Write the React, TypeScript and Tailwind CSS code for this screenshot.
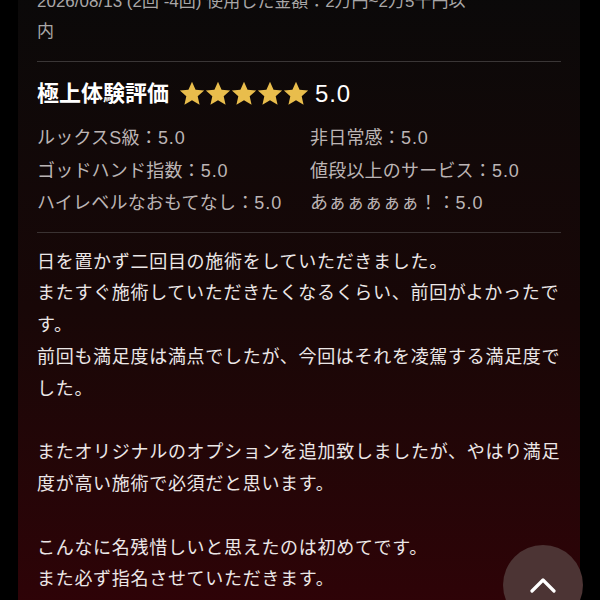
import React from "react";

const Star = () => (
  <svg width="26" height="26" viewBox="0 0 24 24" className="shrink-0">
    <path
      d="M12 0.8l3.3 7.2 7.9.8-5.95 5.3 1.75 7.8L12 17.85l-7 4.05 1.75-7.8L0.8 8.8l7.9-.8z"
      fill="#e9bd4c"
    />
  </svg>
);

const ratings: [string, string][] = [
  ["ルックスS級", "非日常感"],
  ["ゴッドハンド指数", "値段以上のサービス"],
  ["ハイレベルなおもてなし", "あぁぁぁぁぁ！"],
];

const body = `日を置かず二回目の施術をしていただきました。
またすぐ施術していただきたくなるくらい、前回がよかったです。
前回も満足度は満点でしたが、今回はそれを凌駕する満足度でした。

またオリジナルのオプションを追加致しましたが、やはり満足度が高い施術で必須だと思います。

こんなに名残惜しいと思えたのは初めてです。
また必ず指名させていただきます。`;

const Rating = ({ label }: { label: string }) => (
  <span className="whitespace-nowrap">
    {label}：<span className="tracking-[0.9px]">5.0</span>
  </span>
);

export default function App() {
  return (
    <div
      className="relative w-[600px] h-[600px] overflow-hidden bg-black"
      style={{ fontFamily: '"Liberation Sans", "Noto Sans CJK JP", sans-serif' }}
    >
      <div className="ml-[18px] w-[562px] h-[640px] -mt-[13px] px-[19px] bg-gradient-to-b from-[#0a0909] via-[#180707] to-[#300207]">
        <p className="text-[17px] leading-[30px] text-[#a9a7a7]">
          2026/08/13 (2回 -4回) 使用した金額：2万円~2万5千円以
          <br />内
        </p>
        <div className="mt-[14px] h-px bg-[#3a3636]" />
        <div className="mt-[16px] flex h-[32px] items-center">
          <span className="text-[22px] font-bold text-white leading-[32px]">極上体験評価</span>
          <div className="ml-[10px] flex gap-0">
            <Star />
            <Star />
            <Star />
            <Star />
            <Star />
          </div>
          <span className="ml-[6px] text-[24px] tracking-[0.8px] text-white leading-[32px]">5.0</span>
        </div>
        <div className="mt-[12px] grid grid-cols-[273px_1fr] text-[18px] leading-[32.5px] text-[#bcb5b5] tracking-[0.2px]">
          {ratings.map(([a, b], i) => (
            <React.Fragment key={i}>
              <Rating label={a} />
              <Rating label={b} />
            </React.Fragment>
          ))}
        </div>
        <div className="mt-[12px] h-px bg-[#3a3232]" />
        <p className="mt-[14px] whitespace-pre-line text-[18px] leading-[31.8px] tracking-[0.7px] text-[#ece7e7]">
          {body}
        </p>
      </div>
      <div className="absolute left-[503px] top-[545px] flex h-[80px] w-[80px] items-start justify-center rounded-full bg-[#4c3434]">
        <svg width="26" height="16" viewBox="0 0 26 16" className="mt-[32px]">
          <path d="M2 14L13 3l11 11" stroke="white" strokeWidth="3.2" fill="none" strokeLinecap="round" strokeLinejoin="round" />
        </svg>
      </div>
    </div>
  );
}
